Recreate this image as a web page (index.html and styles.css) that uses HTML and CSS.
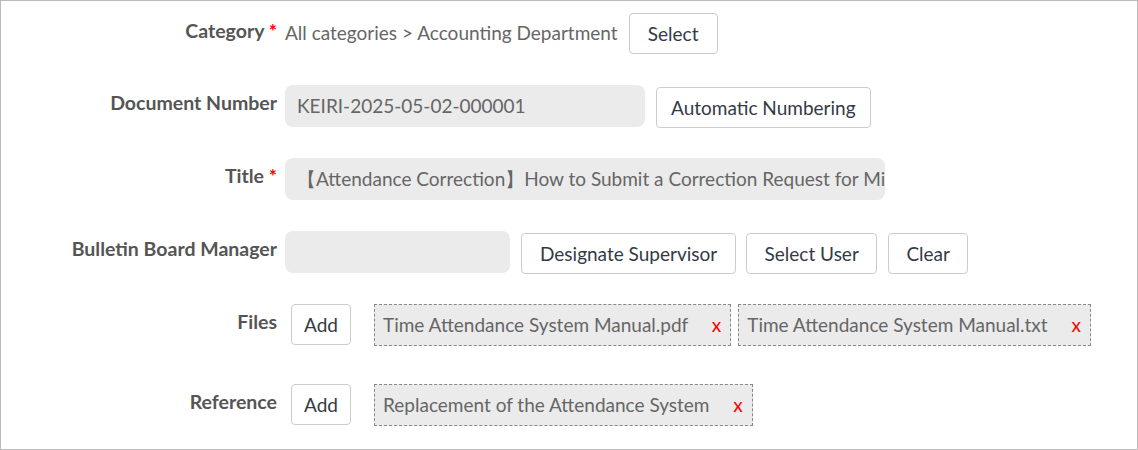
FILE: index.html
```html
<!DOCTYPE html>
<html lang="en">
<head>
    <meta charset="UTF-8">
    <title>Document form</title>
    <link rel="stylesheet" href="styles.css">
</head>
<body>

<div class="form-frame">

    <div class="form-row">
        <div class="label">Category <span class="req">*</span></div>
        <div class="value">
            <span class="category-path">All categories &gt; Accounting Department</span>
            <button class="btn btn-select">Select</button>
        </div>
    </div>

    <div class="form-row">
        <div class="label">Document Number</div>
        <div class="value">
            <div class="field field-docno">KEIRI-2025-05-02-000001</div>
            <button class="btn btn-low">Automatic Numbering</button>
        </div>
    </div>

    <div class="form-row">
        <div class="label">Title <span class="req">*</span></div>
        <div class="value">
            <div class="field field-title">【Attendance Correction】How to Submit a Correction Request for Missed Clock-ins</div>
        </div>
    </div>

    <div class="form-row">
        <div class="label">Bulletin Board Manager</div>
        <div class="value">
            <div class="field field-manager"></div>
            <button class="btn btn-low btn-wide">Designate Supervisor</button>
            <button class="btn btn-low btn-user">Select User</button>
            <button class="btn btn-low btn-clear">Clear</button>
        </div>
    </div>

    <div class="form-row row-files">
        <div class="label">Files</div>
        <div class="value">
            <button class="btn btn-add">Add</button>
            <div class="chips">
                <div class="chip">Time Attendance System Manual.pdf <span class="remove">x</span></div>
                <div class="chip">Time Attendance System Manual.txt <span class="remove">x</span></div>
            </div>
        </div>
    </div>

    <div class="form-row">
        <div class="label">Reference</div>
        <div class="value">
            <button class="btn btn-add">Add</button>
            <div class="chips">
                <div class="chip">Replacement of the Attendance System <span class="remove">x</span></div>
            </div>
        </div>
    </div>

</div>

</body>
</html>
```

FILE: styles.css
```css
html, body {
    margin: 0;
    height: 100%;
    overflow: hidden;
}

body {
    font-family: Lato, "Open Sans", sans-serif;
    font-size: 19px;
    color: #666;
    background-color: white;
}

.form-frame {
    box-sizing: border-box;
    width: 1138px;
    height: 450px;
    border: 1px solid #bbb;
    padding-top: 12px;
    display: flex;
    flex-direction: column;
    gap: 30.6px;
}

.form-row {
    display: flex;
    align-items: flex-start;
    gap: 8px;
}

.row-files {
    margin-bottom: 7px;
}

.label {
    width: 276px;
    flex-shrink: 0;
    text-align: right;
    font-weight: bold;
    font-size: 19.5px;
    color: #555;
    line-height: 24px;
    padding-top: 6px;
}

.req {
    color: red;
}

.value {
    display: flex;
    align-items: flex-start;
    gap: 10px;
}

.category-path {
    line-height: 24px;
    padding-top: 8px;
    margin-right: 1px;
}

.btn {
    font-family: inherit;
    font-size: 19px;
    color: #333a45;
    background-color: white;
    border: 1px solid #ccc;
    border-radius: 4px;
    height: 41px;
    min-width: 80px;
    padding: 0 14px;
    cursor: pointer;
}

.btn-select {
    width: 89px;
}

.btn-wide {
    padding: 0 18px;
    margin-left: 1px;
}

.btn-user {
    width: 131px;
}

.btn-clear {
    width: 80px;
    margin-left: 1px;
}

.btn-low {
    margin-top: 2px;
}

.field-docno + .btn-low {
    margin-left: 1px;
}

.btn-add {
    margin-left: 6px;
    min-width: 0;
    width: 60px;
    padding: 0;
}

.field {
    box-sizing: border-box;
    height: 42px;
    line-height: 42px;
    background-color: #ebebeb;
    border-radius: 8px;
    padding: 0 12px;
    white-space: nowrap;
    overflow: hidden;
}

.field-docno {
    width: 360px;
}

.field-title {
    width: 600px;
}

.field-manager {
    width: 225px;
}

.chips {
    display: flex;
    gap: 7px;
    margin-left: 13px;
}

.chip {
    box-sizing: border-box;
    height: 42px;
    line-height: 40px;
    background-color: #ebebeb;
    border: 1px dashed #888;
    padding: 0 9px 0 8px;
    white-space: nowrap;
}

.remove {
    color: red;
    margin-left: 19px;
}
```
